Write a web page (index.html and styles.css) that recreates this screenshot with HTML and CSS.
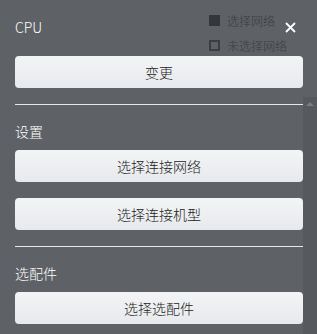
FILE: index.html
```html
<!DOCTYPE html>
<html lang="zh">
<head>
<meta charset="utf-8">
<link rel="stylesheet" href="styles.css">
</head>
<body>
<div class="panel">
  <div class="header">
    <div class="title">CPU</div>
    <div class="legend">
      <div class="legend-item"><span class="sq filled"></span><span>选择网络</span></div>
      <div class="legend-item"><span class="sq hollow"></span><span>未选择网络</span></div>
    </div>
    <button class="close" aria-label="close">
      <svg width="11" height="11" viewBox="0 0 11 11"><path d="M1 1L10 10M10 1L1 10" stroke="#ffffff" stroke-width="1.8" fill="none"/></svg>
    </button>
  </div>
  <button class="btn first">变更</button>
  <hr class="divider">
  <div class="label">设置</div>
  <div class="btn-group">
    <button class="btn">选择连接网络</button>
    <button class="btn">选择连接机型</button>
  </div>
  <hr class="divider">
  <div class="label">选配件</div>
  <button class="btn">选择选配件</button>
  <div class="scrollbar"><span class="arrow"></span></div>
</div>
</body>
</html>
```
FILE: styles.css
```css
* { box-sizing: border-box; }
html, body { margin: 0; padding: 0; }
body {
  background: #5e6165;
  font-family: "Noto Sans CJK SC", "Noto Sans", sans-serif;
  font-weight: 300;
  width: 317px;
  height: 334px;
  overflow: hidden;
}
.panel {
  position: relative;
  height: 334px;
  padding: 0 14px 0 15px;
  display: flex;
  flex-direction: column;
}
.header {
  position: relative;
  display: flex;
  align-items: flex-start;
  justify-content: space-between;
  height: 56px;
}
.title {
  color: #ffffff;
  font-size: 14px;
  line-height: 20px;
  margin-top: 17px;
}
.legend {
  position: absolute;
  left: 194px;
  top: 10px;
  display: flex;
  flex-direction: column;
  gap: 5px;
}
.legend-item {
  display: flex;
  align-items: center;
  height: 20px;
  font-size: 12px;
  color: #3b3e42;
  gap: 7px;
}
.sq {
  width: 11px;
  height: 11px;
  display: inline-block;
}
.sq.filled { background: #33363a; }
.sq.hollow { border: 2px solid #3b3e42; }
.close {
  background: none;
  border: 0;
  padding: 0;
  margin: 22px 7px 0 0;
  width: 11px;
  height: 11px;
  display: flex;
}
.btn {
  display: block;
  width: 100%;
  height: 32px;
  border: 0;
  border-radius: 4px;
  background: linear-gradient(#f3f4f6, #e7e9ec);
  color: #222;
  font-family: "Noto Sans CJK SC", "Noto Sans", sans-serif;
  font-weight: 300;
  font-size: 14px;
  padding: 0;
}
.divider {
  border: 0;
  border-top: 1px solid #e6e7e8;
  margin: 16px 0;
}
.label {
  color: #ffffff;
  font-size: 14px;
  line-height: 20px;
  margin-bottom: 9px;
}
.btn-group {
  display: flex;
  flex-direction: column;
  gap: 16px;
}
.scrollbar {
  position: absolute;
  right: 0;
  top: 97px;
  bottom: 0;
  width: 14px;
  background: #56595d;
}
.arrow {
  position: absolute;
  top: 5px;
  left: 3px;
  width: 0;
  height: 0;
  border-left: 4px solid transparent;
  border-right: 4px solid transparent;
  border-bottom: 4px solid #7a7d81;
}
```
